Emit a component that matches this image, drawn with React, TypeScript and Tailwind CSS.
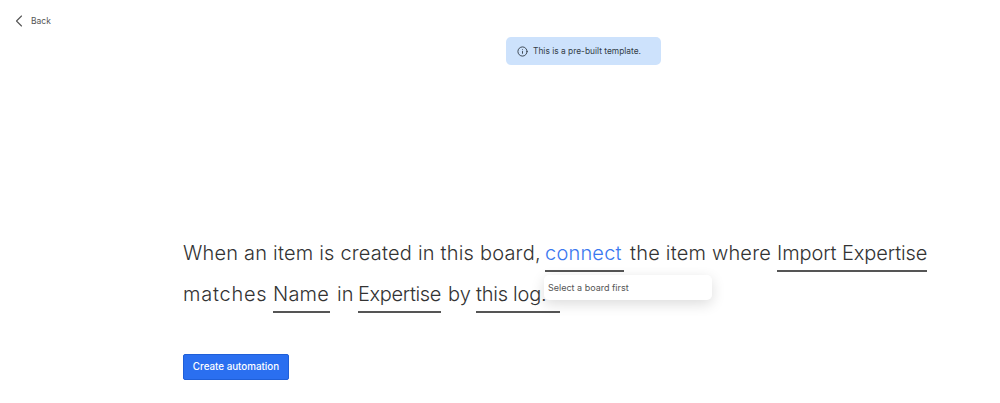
import { ChevronLeft, Info } from 'lucide-react';

const sans = "font-['Inter','Liberation_Sans',sans-serif]";

const Token = ({ label, className = '' }: { label: string; className?: string }) => (
  <span className={`inline-block h-[36px] border-b-2 border-[#555] ${className}`}>{label}</span>
);

const App = () => {
  return (
    <div className={`relative h-[403px] w-[1000px] overflow-hidden bg-white ${sans}`}>
      <div className="mt-[11px] flex h-[20px] items-center gap-[1px] pl-[9px] text-[#555]">
        <ChevronLeft size={20} strokeWidth={1.3} />
        <span className="pl-[1px] text-[8.5px] leading-[14px]">Back</span>
      </div>

      <div className="absolute left-[506px] top-[37px] flex h-[28px] w-[155px] items-center gap-[5px] rounded-[5px] bg-[#cde2fc] pl-[11px] text-[#333d47]">
        <Info size={11} strokeWidth={2} />
        <span className="text-[8.4px]">This is a pre-built template.</span>
      </div>

      <div className="pl-[183px] pt-[205px]">
        <div className="w-[760px] text-[20px] font-light leading-[35px] tracking-[0.2px] text-[#333]">
          <div className="flex h-[41px] whitespace-pre">
            <span className="w-[362px]">When an item is created in this board,</span>
            <Token label="connect" className="w-[79px] text-[#3b78f0]" />
            <span className="w-[153px] pl-[6px]">the item where</span>
            <Token label="Import Expertise" className="w-[150px] tracking-[-0.1px]" />
          </div>
          <div className="flex h-[41px] whitespace-pre">
            <span className="w-[90px] tracking-[0.75px]">matches</span>
            <Token label="Name" className="w-[57px]" />
            <span className="w-[28px] pl-[7px]">in</span>
            <Token label="Expertise" className="w-[83px] tracking-[-0.35px]" />
            <span className="w-[35px] pl-[7px]">by</span>
            <Token label="this log." className="w-[84px] tracking-[-0.25px]" />
          </div>
        </div>

        <button className="mt-[36px] flex h-[26px] w-[106px] items-center justify-center rounded-[2px] border border-[#1f5fd8] bg-[#2a6ff0] text-[9.8px] font-medium text-white">
          Create automation
        </button>
      </div>

      <div className="absolute left-[544px] top-[275px] flex h-[25px] w-[168px] items-center rounded-[5px] bg-white pl-[4px] text-[9px] text-[#555] shadow-[0_4px_14px_rgba(0,0,0,0.14)]">
        Select a board first
      </div>
    </div>
  );
};

export default App;
